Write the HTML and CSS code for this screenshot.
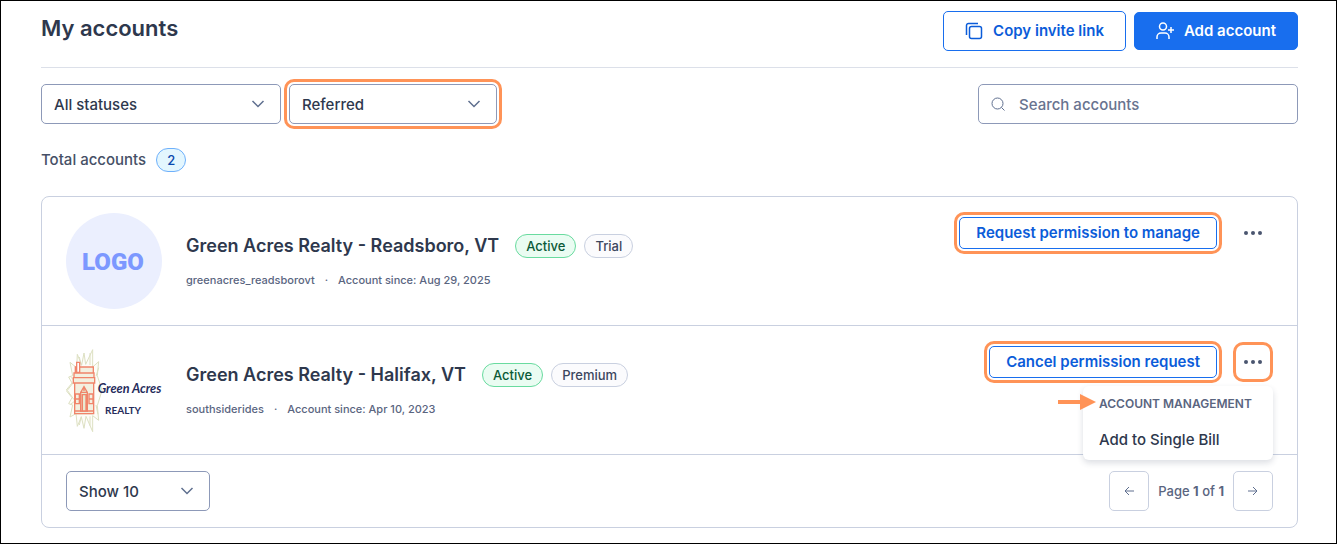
FILE: index.html
```
<!DOCTYPE html>
<html lang="en">
<head>
<meta charset="utf-8">
<title>My accounts</title>
<link rel="stylesheet" href="styles.css">
</head>
<body>
<main class="page">

<header class="page-header">
  <h1>My accounts</h1>
  <div class="header-actions">
    <button type="button" class="btn btn-outline">
      <svg class="icon" width="18" height="18" viewBox="0 0 18 18"><rect x="4.500" y="4.500" width="12" height="12" rx="2"/><path d="M1.500 13V3.500a2 2 0 0 1 2-2H13"/></svg>
      Copy invite link
    </button>
    <button type="button" class="btn btn-primary">
      <svg class="icon" width="18" height="18" viewBox="0 0 18 18"><circle cx="7" cy="4.500" r="3.500"/><path d="M1 17v-2a4 4 0 0 1 4-4h4a4 4 0 0 1 4 4v2M15 5v6M12 8h6"/></svg>
      Add account
    </button>
  </div>
</header>

<div class="filters">
  <div class="select status-select">
    <select aria-label="Status"><option>All statuses</option></select>
    <svg class="chevron" width="14" height="8" viewBox="0 0 14 8"><path d="M1.500 1l5.500 5.500L12.500 1"/></svg>
  </div>
  <div class="select type-select">
    <select class="highlight" aria-label="Account type"><option>Referred</option></select>
    <svg class="chevron" width="14" height="8" viewBox="0 0 14 8"><path d="M1.500 1l5.500 5.500L12.500 1"/></svg>
  </div>
  <div class="search">
    <svg width="14" height="14" viewBox="0 0 14 14"><circle cx="6.500" cy="6.500" r="5.500"/><path d="M10.500 10.500l3 3"/></svg>
    <input type="text" placeholder="Search accounts" aria-label="Search accounts">
  </div>
</div>

<div class="total">Total accounts <span class="badge badge-count">2</span></div>

<section class="accounts">
  <div class="account">
    <svg class="logo" viewBox="0 0 96 96">
      <circle cx="48" cy="48" r="48" fill="#ebeffe"/>
      <text class="logo-text" x="47" y="57" text-anchor="middle">LOGO</text>
    </svg>
    <div class="details">
      <div class="name-row">
        <h2>Green Acres Realty - Readsboro, VT</h2>
        <span class="badge badge-active">Active</span>
        <span class="badge">Trial</span>
      </div>
      <div class="meta"><span>greenacres_readsborovt</span><span>·</span><span>Account since: Aug 29, 2025</span></div>
    </div>
    <div class="actions">
      <button type="button" class="btn btn-outline btn-small highlight">Request permission to manage</button>
      <button type="button" class="more" aria-label="More">
        <svg width="20" height="4" viewBox="0 0 20 4"><circle cx="3" cy="2" r="2"/><circle cx="10" cy="2" r="2"/><circle cx="17" cy="2" r="2"/></svg>
      </button>
    </div>
  </div>

  <div class="account">
    <svg class="logo" viewBox="18 -9 288 288">
      <!-- sunburst -->
      <g fill="#fdfdf8" stroke="#dde0c2" stroke-width="3">
        <path d="M98 14L77 58 72 24 65 60 52 28 50 68 30 52 38 92 26 96 36 114 18 136 36 158 26 176 38 180 30 216 48 206 52 244 64 216 72 250 78 214 98 260 98 212 116 226 112 182 126 136 112 92 116 50 98 66z"/>
        <path d="M42 110L22 136l20 28M90 24v36M58 36l6 26M90 214v28M58 240l6-26M32 96l10 10M32 178l10-8M108 94l8-26M108 180l6 28"/>
      </g>
      <!-- house -->
      <path d="M44 82h56v126H44z" fill="#e3e4c6"/>
      <g fill="none" stroke="#f0846a" stroke-width="4">
        <path d="M46 66h54v18H46zM42 84h60v14H42zM40 98h64v16H40zM44 114h57v92H44zM44 198h57" fill="#f3f0e0"/>
        <path d="M50 82V52h9v30z" fill="#fff"/>
        <path d="M62 198v-56l10-17 10 17v56zM60 142h24M67 198v-49h11v49M72 130v8" fill="#e9e9d2"/>
        <path d="M46 147h12v29H46zM87 147h12v29H87zM46 162h12M87 162h12"/>
      </g>
      <text class="logo-script" x="113" y="144">Green Acres</text>
      <text class="logo-caps" x="135" y="207">REALTY</text>
    </svg>
    <div class="details">
      <div class="name-row">
        <h2>Green Acres Realty - Halifax, VT</h2>
        <span class="badge badge-active">Active</span>
        <span class="badge">Premium</span>
      </div>
      <div class="meta"><span>southsiderides</span><span>·</span><span>Account since: Apr 10, 2023</span></div>
    </div>
    <div class="actions">
      <button type="button" class="btn btn-outline btn-small highlight">Cancel permission request</button>
      <button type="button" class="more more-open" aria-label="More">
        <svg width="20" height="4" viewBox="0 0 20 4"><circle cx="3" cy="2" r="2"/><circle cx="10" cy="2" r="2"/><circle cx="17" cy="2" r="2"/></svg>
      </button>
      <div class="menu">
        <svg class="arrow" width="38" height="16" viewBox="0 0 38 16"><path d="M0 6h22V0l16 8-16 8v-6H0z"/></svg>
        <div class="menu-title">ACCOUNT MANAGEMENT</div>
        <button type="button" class="menu-item">Add to Single Bill</button>
      </div>
    </div>
  </div>

  <footer class="pager">
    <div class="select size-select">
      <select aria-label="Rows per page"><option>Show 10</option></select>
      <svg class="chevron" width="14" height="8" viewBox="0 0 14 8"><path d="M1.500 1l5.500 5.500L12.500 1"/></svg>
    </div>
    <nav class="pages">
      <button type="button" class="page-btn" aria-label="Previous page">
        <svg width="10" height="10" viewBox="0 0 10 10"><path d="M10 5H1M5 1L1 5l4 4"/></svg>
      </button>
      <span>Page <b>1</b> of <b>1</b></span>
      <button type="button" class="page-btn" aria-label="Next page">
        <svg width="10" height="10" viewBox="0 0 10 10"><path d="M0 5h9M5 1l4 4-4 4"/></svg>
      </button>
    </nav>
  </footer>
</section>

</main>
</body>
</html>
```
FILE: styles.css
```
* {
  box-sizing: border-box;
}

body {
  margin: 0;
  color: #2e384d;
  font: 500 15px/24px Inter, "Liberation Sans", sans-serif;
}

button, select, input {
  font: inherit;
  color: inherit;
}

svg {
  flex: none;
}

.page {
  min-height: 100vh;
  padding: 10px 38px 15px 40px;
  border: 1px solid #000;
}

.page-header {
  display: flex;
  align-items: flex-start;
  justify-content: space-between;
  padding-bottom: 16px;
  border-bottom: 1px solid #dce0e9;
}

h1 {
  margin: 0;
  font-size: 22px;
  line-height: 34px;
  font-weight: 600;
}

.header-actions {
  display: flex;
  align-items: center;
  gap: 8px;
}

.btn {
  display: flex;
  align-items: center;
  justify-content: center;
  gap: 10px;
  height: 40px;
  padding: 0 21px;
  border: 1px solid #186eee;
  border-radius: 5px;
  font-weight: 600;
  white-space: nowrap;
}

.btn-outline {
  background: #fff;
  color: #0b5cd9;
}

.btn-primary {
  height: 38px;
  background: #186eee;
  color: #fff;
}

.btn-small {
  height: 32px;
  padding: 0 16px;
}

.icon {
  fill: none;
  stroke: currentColor;
  stroke-width: 1.5;
}

.highlight {
  outline: 3px solid #ff9357;
  outline-offset: 2px;
}

.filters {
  display: flex;
  gap: 8px;
  padding: 16px 0 24px;
}

.select {
  display: grid;
  align-items: center;
}

.select > * {
  grid-area: 1 / 1;
}

.select select {
  width: 100%;
  height: 40px;
  padding: 2px 12px 0;
  border: 1px solid #8d99b8;
  border-radius: 5px;
  background: #fff;
  appearance: none;
}

.status-select {
  width: 240px;
}

.type-select {
  width: 208px;
}

.size-select {
  width: 144px;
}

.chevron {
  justify-self: end;
  margin-right: 16px;
  fill: none;
  stroke: #5f6f8f;
  stroke-width: 1.5;
  pointer-events: none;
}

.search {
  display: flex;
  align-items: center;
  gap: 14px;
  width: 320px;
  height: 40px;
  margin-left: auto;
  padding: 0 12px;
  border: 1px solid #8d99b8;
  border-radius: 5px;
}

.search svg {
  fill: none;
  stroke: #5f6f8f;
}

.search input {
  flex: 1;
  min-width: 0;
  padding: 2px 0 0;
  border: 0;
  outline: 0;
}

.search input::placeholder {
  color: #68738f;
  opacity: 1;
}

.total {
  display: flex;
  align-items: center;
  gap: 10px;
  margin-bottom: 24px;
  color: #465066;
}

.badge {
  height: 24px;
  padding: 0 10px;
  border: 1px solid #c9d0e0;
  border-radius: 12px;
  background: #fbfbfd;
  color: #3b465e;
  font-size: 13px;
  line-height: 22px;
}

.badge-count {
  border-color: #6eb0fb;
  background: #e3f6fe;
  color: #0a49ae;
}

.badge-active {
  border-color: #69db9f;
  background: #eafcf2;
  color: #0b5a38;
}

.accounts {
  border: 1px solid #c9d0e0;
  border-radius: 8px;
}

.account {
  display: flex;
  align-items: center;
  padding: 16px 24px;
  border-bottom: 1px solid #c9d0e0;
}

.logo {
  width: 96px;
  height: 96px;
  margin-right: 24px;
}

.logo-text {
  fill: #7c98ff;
  font: 900 24px Roboto, sans-serif;
}

.logo-script {
  fill: #262c5c;
  font: italic bold 38px Lato, sans-serif;
}

.logo-caps {
  fill: #262c5c;
  font: bold 30px Lato, sans-serif;
}

.details {
  flex: 1;
  padding-bottom: 2px;
}

.name-row {
  display: flex;
  align-items: center;
  gap: 8px;
  margin-bottom: 12px;
}

h2 {
  margin: 0 8px 0 0;
  font-size: 18px;
  line-height: 28px;
  font-weight: 600;
}

.meta {
  display: flex;
  gap: 10px;
  color: #5a657f;
  font-size: 11px;
  line-height: 16px;
}

.actions {
  display: flex;
  align-items: center;
  align-self: flex-start;
  gap: 16px;
  position: relative;
}

.more {
  display: flex;
  align-items: center;
  justify-content: center;
  width: 40px;
  height: 40px;
  padding: 0;
  border: 0;
  border-radius: 10px;
  background: none;
  fill: #4a556f;
}

.more-open {
  outline: 3px solid #ff9357;
  outline-offset: -3px;
}

.menu {
  position: absolute;
  top: 44px;
  right: 0;
  width: 190px;
  padding: 8px 16px;
  border-radius: 6px;
  background: #fff;
  box-shadow: 0 3px 6px rgba(40, 50, 80, 0.16);
}

.menu-title {
  color: #5a657f;
  font-size: 12px;
  line-height: 20px;
  font-weight: 600;
  white-space: nowrap;
}

.menu-item {
  margin-top: 14px;
  padding: 0;
  border: 0;
  background: none;
  line-height: 24px;
}

.arrow {
  position: absolute;
  top: 8px;
  left: -25px;
  fill: #ff9357;
}

.pager {
  display: flex;
  align-items: center;
  justify-content: space-between;
  padding: 16px 24px;
}

.pages {
  display: flex;
  align-items: center;
  gap: 9px;
  color: #5a657f;
  font-size: 13px;
}

.page-btn {
  display: flex;
  align-items: center;
  justify-content: center;
  width: 40px;
  height: 40px;
  padding: 0;
  border: 1px solid #c9d0e0;
  border-radius: 5px;
  background: #fff;
  fill: none;
  stroke: #5f6f8f;
}
```
